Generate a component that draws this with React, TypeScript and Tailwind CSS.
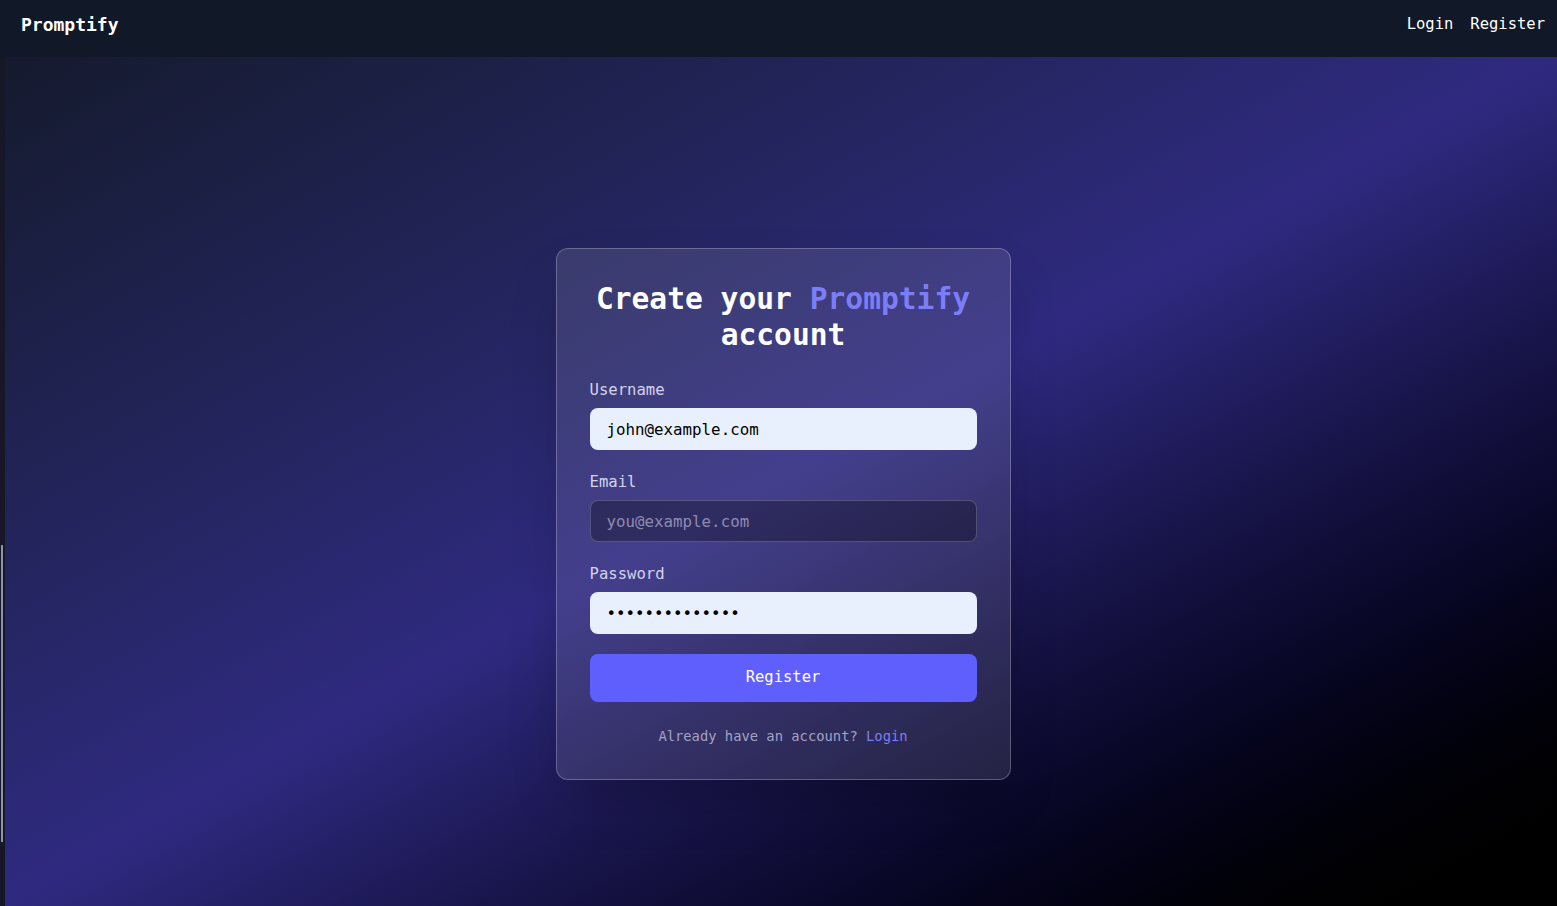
import { useState } from 'react';

const mono = 'font-["DejaVu_Sans_Mono","Liberation_Mono",monospace]';

function Field({
  label,
  type,
  value,
  placeholder,
  filled,
}: {
  label: string;
  type: string;
  value?: string;
  placeholder?: string;
  filled?: boolean;
}) {
  const [val, setVal] = useState(value ?? '');
  return (
    <div className="flex flex-col">
      <label className="text-[15.6px] leading-6 text-[#d3d4ea] mb-1.5">{label}</label>
      <input
        type={type}
        value={val}
        placeholder={placeholder}
        onChange={e => setVal(e.target.value)}
        className={`h-[42px] w-full rounded-lg px-4 text-[15.8px] outline-none ${mono} ${
          filled
            ? 'bg-[#e8f0fe] text-black border border-transparent'
            : 'bg-black/30 border border-white/20 text-white placeholder:text-[#8d8bb0]'
        }`}
      />
    </div>
  );
}

export default function App() {
  return (
    <div className={`h-[906px] flex flex-col overflow-hidden ${mono}`}>
      <header className="h-[57px] shrink-0 bg-[#111827] flex items-start justify-between pl-[21px] pr-3 pt-[11px] text-white">
        <span className="text-lg font-bold">Promptify</span>
        <nav className="flex gap-[17px] text-[15.5px] leading-6 pt-px">
          <a href="#">Login</a>
          <a href="#">Register</a>
        </nav>
      </header>

      <div className="flex flex-1">
        {/* left edge strip */}
        <div className="w-[5px] shrink-0 bg-[#161827] flex flex-col pt-[488px]">
          <div className="ml-[1px] w-[2px] h-[297px] bg-[#8b93ae]" />
        </div>

        <main className="flex-1 flex justify-center items-start pt-[191px] pl-1 bg-gradient-to-br from-[#151a2e] via-[#2f2a80] to-black">
          <div className="w-[455px] rounded-xl border border-white/25 bg-white/10 shadow-2xl px-[33px] pt-[32px] pb-[33px]">
            <h1 className="text-[29.6px] leading-9 font-bold text-white text-center mb-[25px]">
              Create your <span className="text-[#7c7ef8]">Promptify</span> account
            </h1>

            <div className="flex flex-col gap-5">
              <Field label="Username" type="text" value="john@example.com" filled />
              <Field label="Email" type="email" placeholder="you@example.com" />
              <Field label="Password" type="password" value="supersecret123" filled />
            </div>

            <button className="mt-5 w-full h-12 rounded-lg bg-[#5f5ffd] text-white text-[15.5px]">
              Register
            </button>

            <p className="mt-6 text-center text-[13.8px] leading-5 text-[#a3a2c4]">
              Already have an account?{' '}
              <a href="#" className="text-[#7c7ef8]">
                Login
              </a>
            </p>
          </div>
        </main>
      </div>
    </div>
  );
}
